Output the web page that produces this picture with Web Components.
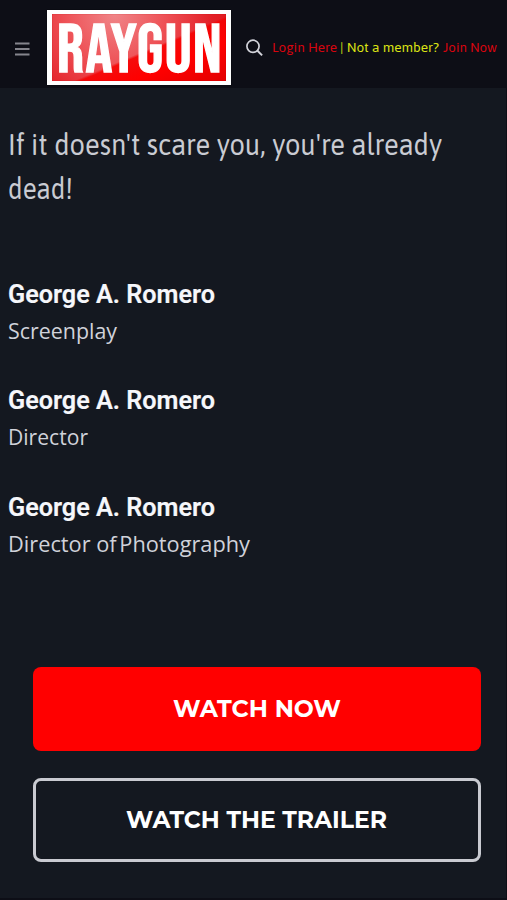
<!DOCTYPE html>
<html lang="en"><head><meta charset="utf-8"><title>Raygun</title>
<style>html,body{margin:0;background:#141820}body{width:507px;height:900px;overflow:hidden;font-family:"Noto Sans",sans-serif}</style></head>
<body>
<movie-page></movie-page>
<script>
const define=(name,html,ready)=>customElements.define(name,class extends HTMLElement{
  connectedCallback(){
    if(!this.shadowRoot)this.attachShadow({mode:'open'}).innerHTML=html;
    if(ready)ready(this);
  }
});

// A single line of text condensed or widened to the width given in pixels.
define('fit-text',`<style>:host{display:block;white-space:nowrap;flex:none}span{display:inline-block;transform-origin:0 50%;vertical-align:top}</style><span><slot></slot></span>`,el=>{
  const w=+el.getAttribute('w'),s=el.shadowRoot.querySelector('span');
  el.style.width=w+'px';
  s.style.transform='scaleX('+w/s.getBoundingClientRect().width+')';
});

define('raygun-logo',`<style>
:host{display:block;box-sizing:border-box;width:184px;height:75px;border:5px solid #fff;border-width:4.5px 5px;flex:none;
background:linear-gradient(157deg,transparent 0 54%,rgba(246,0,0,.85) 56%,#ff0000 72%,#e30000 100%),radial-gradient(circle at 36% 0,#f08588 0,#ee5257 38%,#e32027 75%,#dc141b 100%);box-shadow:inset 0 0 1px #a00,0 0 1px #000}
fit-text{margin:7px 0 0 5.5px;font:400 69px/61px "Bebas Neue","League Gothic",Roboto,sans-serif;color:#fff;letter-spacing:1.5px;-webkit-text-stroke:1.3px #fff}
</style><fit-text w="166">RAYGUN</fit-text>`);

define('site-header',`<style>
:host{display:flex;box-sizing:border-box;height:88px;background:#0d0e16;padding:10px 0 0 15px;font:13px/18px Asap,"Noto Sans",sans-serif}
svg{display:block;flex:none}.menu{margin:32px 16.5px 0 0}.search{margin:29px 9px 0 15px}
.links{display:flex;margin-top:29px;color:#d8040e}.y{color:#dce314}
</style>
<svg class="menu" width="15" height="14" viewBox="0 0 15 14"><path d="M0 1.5h14.5M0 7h14.5M0 12.5h14.5" stroke="#85858d" stroke-width="1.9"/></svg>
<raygun-logo></raygun-logo>
<svg class="search" width="17" height="18" viewBox="0 0 17 18"><circle cx="7" cy="7.3" r="6.1" fill="none" stroke="#d2d3da" stroke-width="1.7"/><path d="M11.5 11.8l4.6 4.6" stroke="#d2d3da" stroke-width="2"/></svg>
<div class="links"><fit-text w="65" style="margin-right:3px">Login Here</fit-text><fit-text class="y" w="99" style="margin-right:4px">| Not a member?</fit-text><fit-text w="54">Join Now</fit-text></div>`);

define('credit-item',`<style>
:host{display:block;height:106.3px}
.n{font:600 26px/36px Roboto,sans-serif;color:#f6f7fb;-webkit-text-stroke:.2px #f6f7fb}
.r{font:22px/30px "Open Sans",sans-serif;color:#d0d2da;margin-top:3px}
</style><fit-text class="n" w="207">George A. Romero</fit-text><div class="r"><slot></slot></div>`);

define('action-button',`<style>
:host{display:flex;box-sizing:border-box;height:84px;border-radius:8px;align-items:center;justify-content:center;background:#f00;color:#fff;font:700 24px/32px Montserrat,Inter,sans-serif}
:host([outline]){background:none;border:3px solid #c9cad1}
</style><slot></slot>`);

define('movie-page',`<style>
:host{display:block;box-sizing:border-box;height:900px;border:solid #0d0e16;border-width:0 1px 2px 0}main{padding:34px 7px 0 8px}
.tag{font:29.5px/44.4px Asap,"Noto Sans",sans-serif;color:#c9cbd2;height:154px}
.credits{height:391px}.actions{display:grid;gap:27px;padding:0 18px 0 25px}
.actions fit-text{margin-right:1px}
.tight{word-spacing:-3px}
</style><site-header></site-header><main>
<div class="tag"><fit-text w="434">If it doesn't scare you, you're already</fit-text><fit-text w="65">dead!</fit-text></div>
<div class="credits"><credit-item><fit-text w="109">Screenplay</fit-text></credit-item><credit-item><fit-text w="80">Director</fit-text></credit-item><credit-item><fit-text w="242">Director <span class="tight">of Photography</span></fit-text></credit-item></div>
<div class="actions"><action-button><fit-text w="168">WATCH NOW</fit-text></action-button><action-button outline><fit-text w="261">WATCH THE TRAILER</fit-text></action-button></div>
</main>`);
</script></body></html>
